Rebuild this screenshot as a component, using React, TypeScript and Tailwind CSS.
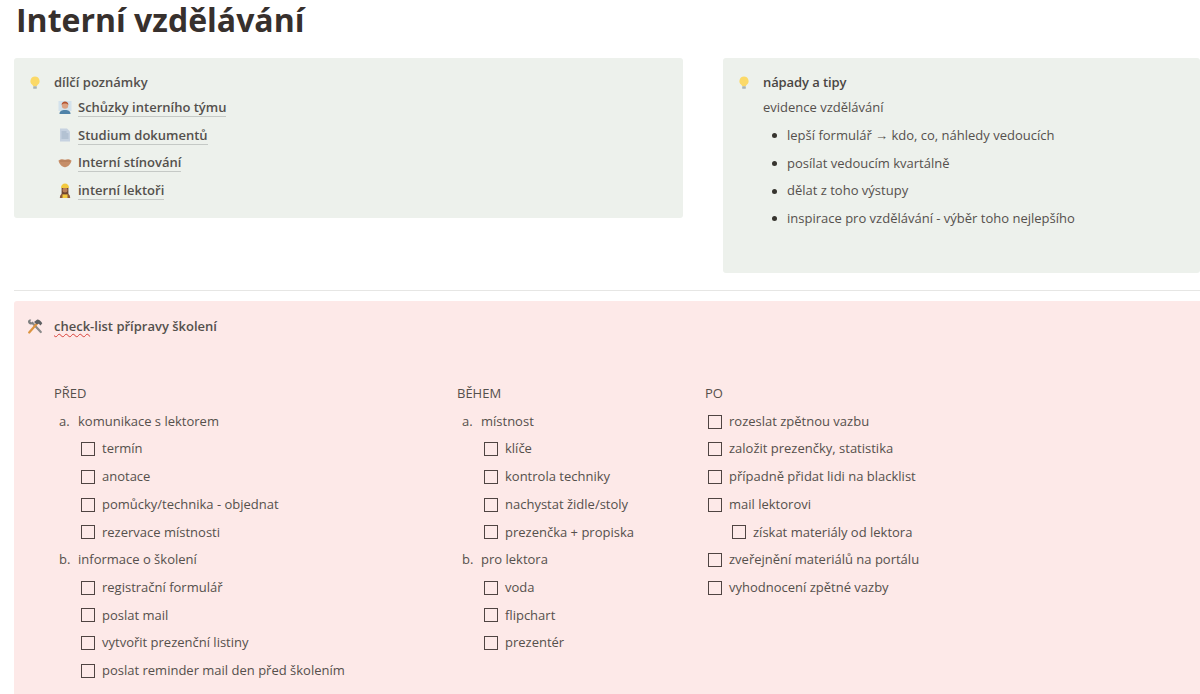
import React from 'react';

const Bulb = () => (
  <svg width="12" height="14" viewBox="0 0 12 14" className="shrink-0">
    <path d="M6 0.500a4.600 4.600 0 0 0-2.700 8.300c.5.4.7.9.8 1.400h3.800c.1-.5.3-1 .8-1.400A4.600 4.600 0 0 0 6 .5z" fill="#fbd968" />
    <rect x="4.200" y="10.200" width="3.600" height="2.600" rx="0.600" fill="#a9b4b6" />
  </svg>
);

const Person = () => (
  <svg width="14" height="14" viewBox="0 0 14 14">
    <rect x="0.500" y="1" width="13" height="10" fill="#d3e2ec" />
    <path d="M1.500 14c0-3 2-4 5.500-4s5.500 1 5.500 4z" fill="#4f82a8" />
    <circle cx="7" cy="5.500" r="3.200" fill="#dba283" />
    <path d="M3.600 5c0-2.400 1.500-3.600 3.400-3.600s3.400 1.200 3.400 3.600c-1-1.200-2-1.500-3.400-1.500S4.600 3.800 3.600 5z" fill="#b4532f" />
  </svg>
);

const Doc = () => (
  <svg width="12" height="14" viewBox="0 0 12 14">
    <path d="M1 .5h7l3 3v10H1z" fill="#c6d2e0" />
    <path d="M2.500 4h5M2.500 6h7M2.500 8h7M2.500 10h7" stroke="#98a9bf" strokeWidth="0.8" />
  </svg>
);

const Hands = () => (
  <svg width="14" height="10" viewBox="0 0 14 10">
    <path d="M0.500 2.500C3 0.800 5 1 7 1.800 9 1 11 0.800 13.500 2.500 13 6 10 9 7 9.200 4 9 1 6 0.500 2.500z" fill="#c68e68" />
    <path d="M2 3h10" stroke="#a6714f" strokeWidth="0.7" />
  </svg>
);

const Worker = () => (
  <svg width="12" height="15" viewBox="0 0 12 15">
    <path d="M0.800 15c0-3.400 1.800-5 5.200-5s5.200 1.600 5.200 5z" fill="#8d5a3c" />
    <path d="M2.600 5h6.800v6H2.600z" fill="#6e4530" />
    <circle cx="6" cy="7" r="2.500" fill="#b97e58" />
    <path d="M2 5c0-3 1.800-4.500 4-4.500S10 2 10 5z" fill="#f3c93e" />
    <rect x="3.500" y="11.500" width="5" height="3.500" fill="#f3c93e" />
  </svg>
);

const Tools = () => (
  <svg width="16" height="15" viewBox="0 0 16 15">
    <path d="M13.800 13L5.500 4" stroke="#8a8a8a" strokeWidth="2.200" strokeLinecap="round" />
    <path d="M1 2.200C1.400.8 3 .2 4.200.8L3.200 2.300 4.400 3.500 6 2.600C6.500 4 5.500 5.700 3.800 5.500 2.200 5.300.8 4 1 2.200z" fill="#7d7f80" />
    <path d="M2.200 13.500L10.500 4" stroke="#dc9440" strokeWidth="2.200" strokeLinecap="round" />
    <path d="M7 3L10.300 .5C12 .6 14 2 15.300 4.200L13.500 6.500 11.800 4.800 9.500 5.200z" fill="#5f6163" />
  </svg>
);

const Row = ({ children, className = '' }: { children: React.ReactNode; className?: string }) => (
  <div className={`flex h-[27.7px] items-center ${className}`}>{children}</div>
);

const Check = ({ label, nested = false }: { label: string; nested?: boolean }) => (
  <Row className={nested ? 'pl-[24px]' : ''}>
    <span className="mr-[7px] h-[14px] w-[14px] shrink-0 border-[1.5px] border-[#4f4442]" />
    <span>{label}</span>
  </Row>
);

const Lettered = ({ letter, label }: { letter: string; label: string }) => (
  <Row>
    <span className="w-[24px] pl-[5px]">{letter}.</span>
    <span>{label}</span>
  </Row>
);

const PageLink = ({ icon, label }: { icon: React.ReactNode; label: string }) => (
  <Row>
    <span className="flex w-[24px] shrink-0 justify-center pl-[1px] pr-[3px]">{icon}</span>
    <span className="border-b border-[#c5c9c6] font-semibold leading-[18px] text-[#54504d]">{label}</span>
  </Row>
);

const Bullet = ({ label }: { label: string }) => (
  <Row>
    <span className="ml-[9px] mr-[10px] h-[5px] w-[5px] rounded-full bg-[#37352f]" />
    <span>{label}</span>
  </Row>
);

export default function App() {
  return (
    <div className="h-[694px] w-[1200px] overflow-hidden bg-white font-['Open_Sans',sans-serif] text-[13px] text-[#55504c]">
      <div className="h-[58px] pl-[16px] text-[32px] font-bold leading-[40px] text-[#37302d]">
        Interní vzdělávání
      </div>

      <div className="flex items-start">
        <div className="ml-[14px] h-[160px] w-[669px] rounded-[3px] bg-[#edf1ec] pl-[15px] pt-[16px]">
          <div className="flex h-[18px] items-center">
            <span className="w-[25px]"><Bulb /></span>
            <span className="font-semibold text-[#54504d]">dílčí poznámky</span>
          </div>
          <div className="pl-[25px] pt-[1.5px]">
            <PageLink icon={<Person />} label="Schůzky interního týmu" />
            <PageLink icon={<Doc />} label="Studium dokumentů" />
            <PageLink icon={<Hands />} label="Interní stínování" />
            <PageLink icon={<Worker />} label="interní lektoři" />
          </div>
        </div>

        <div className="ml-[40px] h-[215px] flex-1 rounded-[3px] bg-[#edf1ec] pl-[15px] pt-[16px]">
          <div className="flex h-[18px] items-center">
            <span className="w-[25px]"><Bulb /></span>
            <span className="font-semibold tracking-[-0.1px] text-[#4a4643]">nápady a tipy</span>
          </div>
          <div className="pl-[25px] pt-[6px]">
            <div className="flex h-[20px] items-center">evidence vzdělávání</div>
            <div className="pt-[4px]">
              <Bullet label="lepší formulář → kdo, co, náhledy vedoucích" />
              <Bullet label="posílat vedoucím kvartálně" />
              <Bullet label="dělat z toho výstupy" />
              <Bullet label="inspirace pro vzdělávání - výběr toho nejlepšího" />
            </div>
          </div>
        </div>
      </div>

      <div className="ml-[14px] mt-[17px] h-px bg-[#e6e6e4]" />

      <div className="ml-[14px] mt-[10px] h-[393px] rounded-tl-[3px] bg-[#fde9e8] pl-[13px] pt-[17px]">
        <div className="flex h-[17px] items-center">
          <span className="w-[27px]"><Tools /></span>
          <span className="font-semibold text-[#54504d]">
            <span className="underline decoration-[#d9423a] decoration-wavy decoration-1 underline-offset-2">check</span>-list přípravy školení
          </span>
        </div>

        <div className="flex pl-[27px] pt-[45px]">
          <div className="w-[403px]">
            <Row>PŘED</Row>
            <Lettered letter="a" label="komunikace s lektorem" />
            <div className="pl-[27px]">
              <Check label="termín" />
              <Check label="anotace" />
              <Check label="pomůcky/technika - objednat" />
              <Check label="rezervace místnosti" />
            </div>
            <Lettered letter="b" label="informace o školení" />
            <div className="pl-[27px]">
              <Check label="registrační formulář" />
              <Check label="poslat mail" />
              <Check label="vytvořit prezenční listiny" />
              <Check label="poslat reminder mail den před školením" />
            </div>
          </div>

          <div className="w-[248px]">
            <Row>BĚHEM</Row>
            <Lettered letter="a" label="místnost" />
            <div className="pl-[27px]">
              <Check label="klíče" />
              <Check label="kontrola techniky" />
              <Check label="nachystat židle/stoly" />
              <Check label="prezenčka + propiska" />
            </div>
            <Lettered letter="b" label="pro lektora" />
            <div className="pl-[27px]">
              <Check label="voda" />
              <Check label="flipchart" />
              <Check label="prezentér" />
            </div>
          </div>

          <div className="flex-1">
            <Row>PO</Row>
            <div className="pl-[3px]">
              <Check label="rozeslat zpětnou vazbu" />
              <Check label="založit prezenčky, statistika" />
              <Check label="případně přidat lidi na blacklist" />
              <Check label="mail lektorovi" />
              <Check nested label="získat materiály od lektora" />
              <Check label="zveřejnění materiálů na portálu" />
              <Check label="vyhodnocení zpětné vazby" />
            </div>
          </div>
        </div>
      </div>
    </div>
  );
}
